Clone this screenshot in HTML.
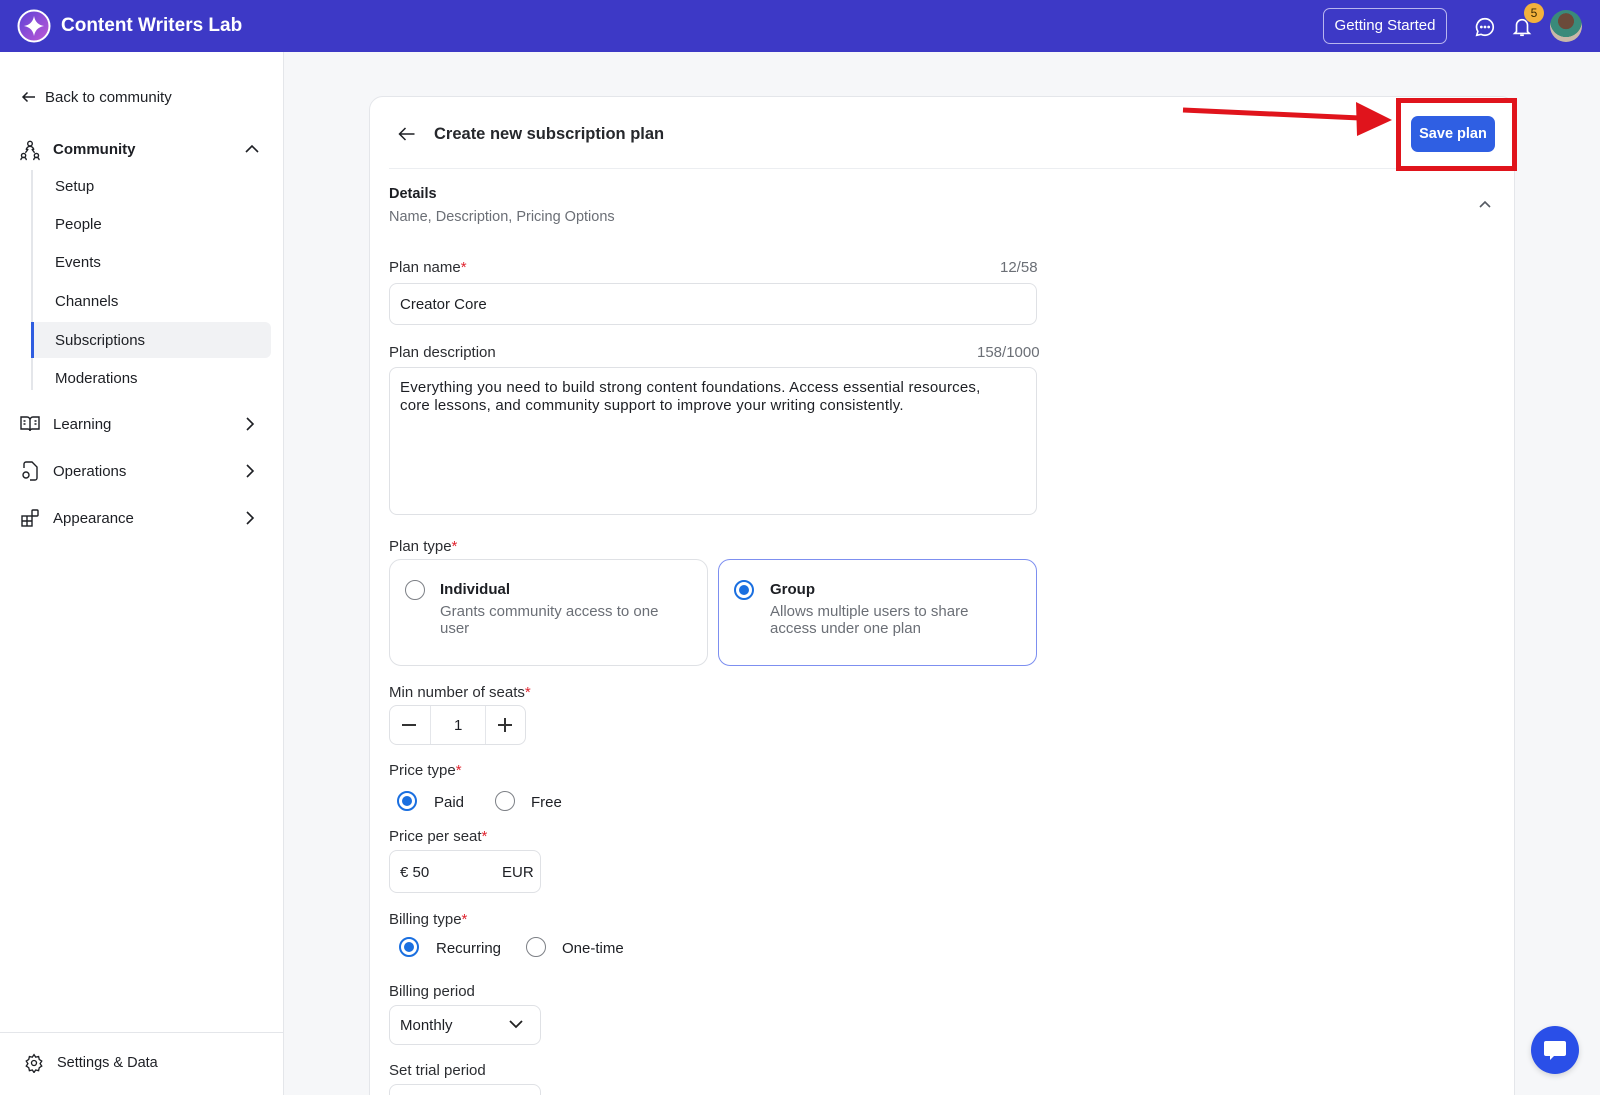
<!DOCTYPE html>
<html><head><meta charset="utf-8"><style>
*{box-sizing:border-box;margin:0;padding:0}
html,body{width:1600px;height:1095px;overflow:hidden}
body{background:#f6f7f9;font-family:"Liberation Sans",Arial,sans-serif;color:#1d1f24;position:relative;font-size:15px}
.abs{position:absolute}
.hdr{left:0;top:0;width:1600px;height:52px;background:#3d39c6}
.side{left:0;top:52px;width:284px;height:1043px;background:#fff;border-right:1px solid #e4e6ea}
.t{position:absolute;white-space:nowrap;line-height:1}
.card{left:369px;top:96px;width:1146px;height:1040px;background:#fff;border:1px solid #e4e6ea;border-radius:14px}
.inp{position:absolute;border:1px solid #dfe1e5;border-radius:8px;background:#fff}
.lbl{position:absolute;font-size:15px;color:#2b2d31;line-height:1;white-space:nowrap}
.req{color:#e0242f}
.radio{position:absolute;width:20px;height:20px;border-radius:50%;border:1.5px solid #7d8086;background:#fff}
.radio.on{border:2px solid #1a6fe0}
.radio.on::after{content:"";position:absolute;left:3px;top:3px;width:10px;height:10px;border-radius:50%;background:#1a6fe0}
.gray{color:#6b6f76}
</style></head><body>
<div class="abs hdr"></div>
<svg class="abs" style="left:17px;top:9px" width="34" height="34" viewBox="0 0 34 34"><defs><linearGradient id="g" x1="0" y1="0" x2="1" y2="1"><stop offset="0" stop-color="#5b3fd6"/><stop offset="1" stop-color="#c05ad6"/></linearGradient></defs><circle cx="17" cy="17" r="15.5" fill="url(#g)" stroke="#fff" stroke-width="2"/><path d="M17 7 Q18.5 15.5 27 17 Q18.5 18.5 17 27 Q15.5 18.5 7 17 Q15.5 15.5 17 7Z" fill="#fff"/></svg>
<div class="t" style="left:61px;top:16px;color:#fff;font-weight:bold;font-size:19px">Content Writers Lab</div>
<div class="abs" style="left:1323px;top:8px;width:124px;height:36px;border:1.5px solid #b9b6ee;border-radius:7px;color:#fff;font-size:15px;text-align:center;line-height:34px">Getting Started</div>
<svg class="abs" style="left:1474px;top:16px" width="22" height="22" viewBox="0 0 24 24" fill="none" stroke="#fff" stroke-width="1.8"><path d="M12 3a9 9 0 0 1 0 18c-1.5 0-3-.4-4.3-1L3 21l1.2-4.2A9 9 0 0 1 12 3z"/><circle cx="8" cy="12" r=".6" fill="#fff"/><circle cx="12" cy="12" r=".6" fill="#fff"/><circle cx="16" cy="12" r=".6" fill="#fff"/></svg>
<svg class="abs" style="left:1511px;top:15px" width="22" height="24" viewBox="0 0 24 24" fill="none" stroke="#fff" stroke-width="1.8"><path d="M6 17V10a6 6 0 0 1 12 0v7l2 2H4z"/><path d="M10 21h4"/></svg>
<div class="abs" style="left:1524px;top:3px;width:20px;height:20px;border-radius:50%;background:#f3b23c;color:#3b2a00;font-size:12px;text-align:center;line-height:20px">5</div>
<div class="abs" style="left:1550px;top:10px;width:32px;height:32px;border-radius:50%;background:radial-gradient(circle at 50% 35%,#6b4a3a 0 30%,#3a8a7a 31% 60%,#c9b8a8 61%)"></div>

<div class="abs side"></div>
<svg class="abs" style="left:20px;top:88px" width="18" height="18" viewBox="0 0 24 24" fill="none" stroke="#1d1f24" stroke-width="2"><path d="M20 12H4M10 6l-6 6 6 6"/></svg>
<div class="t" style="left:45px;top:90px">Back to community</div>
<svg class="abs" style="left:19px;top:139px" width="22" height="22" viewBox="0 0 24 24" fill="none" stroke="#1d1f24" stroke-width="1.5"><circle cx="12" cy="5" r="2.5"/><circle cx="5" cy="18" r="2.3"/><circle cx="19" cy="18" r="2.3"/><path d="M8 12a4 4 0 0 1 8 0M2 23a3 3 0 0 1 6 0M16 23a3 3 0 0 1 6 0M7 15l3-4M17 15l-3-4"/></svg>
<div class="t" style="left:53px;top:142px;font-weight:bold">Community</div>
<svg class="abs" style="left:244px;top:143px" width="16" height="12" viewBox="0 0 16 12" fill="none" stroke="#1d1f24" stroke-width="1.6"><path d="M2 9l6-6 6 6"/></svg>
<div class="abs" style="left:31px;top:170px;width:2px;height:220px;background:#e4e6ea"></div>
<div class="abs" style="left:31px;top:322px;width:240px;height:36px;background:#f1f2f4;border-radius:0 6px 6px 0"></div>
<div class="abs" style="left:31px;top:322px;width:3px;height:36px;background:#2f5de0"></div>
<div class="t" style="left:55px;top:179px">Setup</div>
<div class="t" style="left:55px;top:217px">People</div>
<div class="t" style="left:55px;top:255px">Events</div>
<div class="t" style="left:55px;top:294px">Channels</div>
<div class="t" style="left:55px;top:333px">Subscriptions</div>
<div class="t" style="left:55px;top:371px">Moderations</div>
<svg class="abs" style="left:20px;top:415px" width="20" height="18" viewBox="0 0 20 18" fill="none" stroke="#1d1f24" stroke-width="1.4"><path d="M1 2h6a3 3 0 0 1 3 3v11a2 2 0 0 0-2-2H1zM19 2h-6a3 3 0 0 0-3 3v11a2 2 0 0 1 2-2h7z"/><path d="M3.5 6h2M3.5 9h2M14.5 6h2M14.5 9h2"/></svg>
<div class="t" style="left:53px;top:417px">Learning</div>
<svg class="abs" style="left:21px;top:461px" width="18" height="20" viewBox="0 0 18 20" fill="none" stroke="#1d1f24" stroke-width="1.4"><path d="M3 7V3a2 2 0 0 1 2-2h6l5 5v11a2 2 0 0 1-2 2H9"/><circle cx="5" cy="14" r="3"/></svg>
<div class="t" style="left:53px;top:464px">Operations</div>
<svg class="abs" style="left:21px;top:509px" width="18" height="18" viewBox="0 0 18 18" fill="none" stroke="#1d1f24" stroke-width="1.4"><rect x="1" y="7" width="10" height="10"/><path d="M1 12h10M6 7v10"/><rect x="11" y="1" width="6" height="6" rx="1"/></svg>
<div class="t" style="left:53px;top:511px">Appearance</div>
<svg class="abs" style="left:245px;top:417px" width="10" height="14" viewBox="0 0 10 14" fill="none" stroke="#1d1f24" stroke-width="1.6"><path d="M2 1l6 6-6 6"/></svg>
<svg class="abs" style="left:245px;top:464px" width="10" height="14" viewBox="0 0 10 14" fill="none" stroke="#1d1f24" stroke-width="1.6"><path d="M2 1l6 6-6 6"/></svg>
<svg class="abs" style="left:245px;top:511px" width="10" height="14" viewBox="0 0 10 14" fill="none" stroke="#1d1f24" stroke-width="1.6"><path d="M2 1l6 6-6 6"/></svg>
<div class="abs" style="left:0;top:1032px;width:284px;height:1px;background:#e4e6ea"></div>
<svg class="abs" style="left:24px;top:1053px" width="20" height="20" viewBox="0 0 24 24" fill="none" stroke="#1d1f24" stroke-width="1.6"><circle cx="12" cy="12" r="3"/><path d="M12 2l2 3 3.5-.8.8 3.5 3 2-2 3 2 3-3 2-.8 3.5-3.5-.8-2 3-2-3-3.5.8-.8-3.5-3-2 2-3-2-3 3-2 .8-3.5 3.5.8z"/></svg>
<div class="t" style="left:57px;top:1056px;font-size:14.5px">Settings &amp; Data</div>

<div class="abs card"></div>
<svg class="abs" style="left:398px;top:126px" width="18" height="16" viewBox="0 0 24 20" fill="none" stroke="#1d1f24" stroke-width="2"><path d="M22 10H3M10 2l-8 8 8 8"/></svg>
<div class="t" style="left:434px;top:126px;font-size:16.5px;font-weight:bold;color:#26282c">Create new subscription plan</div>
<div class="abs" style="left:389px;top:168px;width:1106px;height:1px;background:#eceef1"></div>
<div class="abs" style="left:1396px;top:98px;width:121px;height:73px;border:5px solid #e0141c"></div>
<div class="abs" style="left:1411px;top:116px;width:84px;height:36px;background:#2f5fe3;border-radius:7px;color:#fff;font-weight:bold;font-size:14.5px;text-align:center;line-height:36px">Save plan</div>
<svg class="abs" style="left:1180px;top:98px" width="215" height="42" viewBox="0 0 215 42"><path d="M3 12 L180 20" stroke="#e0141c" stroke-width="5"/><path d="M176 4 L212 22 L177 38 Z" fill="#e0141c"/></svg>

<div class="t" style="left:389px;top:187px;font-weight:bold;font-size:14.5px">Details</div>
<div class="t gray" style="left:389px;top:210px;font-size:14.5px">Name, Description, Pricing Options</div>
<svg class="abs" style="left:1479px;top:200px" width="12" height="8" viewBox="0 0 12 8" fill="none" stroke="#555a63" stroke-width="1.6"><path d="M1 7l5-5 5 5"/></svg>

<div class="lbl" style="left:389px;top:260px">Plan name<span class="req">*</span></div>
<div class="lbl gray" style="left:1000px;top:260px">12/58</div>
<div class="inp" style="left:389px;top:283px;width:648px;height:42px"></div>
<div class="t" style="left:400px;top:297px;font-size:15px">Creator Core</div>

<div class="lbl" style="left:389px;top:345px">Plan description</div>
<div class="lbl gray" style="left:977px;top:345px">158/1000</div>
<div class="inp" style="left:389px;top:367px;width:648px;height:148px"></div>
<div class="abs" style="left:400px;top:379px;width:600px;font-size:15px;line-height:18px;letter-spacing:0.2px">Everything you need to build strong content foundations. Access essential resources, core lessons, and community support to improve your writing consistently.</div>

<div class="lbl" style="left:389px;top:539px">Plan type<span class="req">*</span></div>
<div class="inp" style="left:389px;top:559px;width:319px;height:107px;border-radius:12px"></div>
<div class="inp" style="left:718px;top:559px;width:319px;height:107px;border-radius:12px;border-color:#7d8ff0"></div>
<div class="radio" style="left:405px;top:580px"></div>
<div class="radio on" style="left:734px;top:580px"></div>
<div class="t" style="left:440px;top:582px;font-weight:bold;font-size:15px">Individual</div>
<div class="abs gray" style="left:440px;top:603px;width:225px;font-size:15px;line-height:17px">Grants community access to one user</div>
<div class="t" style="left:770px;top:582px;font-weight:bold;font-size:15px">Group</div>
<div class="abs gray" style="left:770px;top:603px;width:220px;font-size:15px;line-height:17px">Allows multiple users to share access under one plan</div>

<div class="lbl" style="left:389px;top:685px">Min number of seats<span class="req">*</span></div>
<div class="inp" style="left:389px;top:705px;width:137px;height:40px"></div>
<div class="abs" style="left:430px;top:706px;width:1px;height:38px;background:#e4e6ea"></div>
<div class="abs" style="left:485px;top:706px;width:1px;height:38px;background:#e4e6ea"></div>
<div class="abs" style="left:402px;top:724px;width:14px;height:1.6px;background:#333"></div>
<div class="t" style="left:454px;top:718px;font-size:15px">1</div>
<div class="abs" style="left:498px;top:724px;width:14px;height:1.6px;background:#333"></div>
<div class="abs" style="left:504px;top:718px;width:1.6px;height:14px;background:#333"></div>

<div class="lbl" style="left:389px;top:763px">Price type<span class="req">*</span></div>
<div class="radio on" style="left:397px;top:791px"></div>
<div class="t" style="left:434px;top:795px;font-size:15px">Paid</div>
<div class="radio" style="left:495px;top:791px"></div>
<div class="t" style="left:531px;top:795px;font-size:15px">Free</div>

<div class="lbl" style="left:389px;top:829px">Price per seat<span class="req">*</span></div>
<div class="inp" style="left:389px;top:850px;width:152px;height:43px"></div>
<div class="t" style="left:400px;top:865px;font-size:15px">€ 50</div>
<div class="t" style="left:502px;top:865px;font-size:15px">EUR</div>

<div class="lbl" style="left:389px;top:912px">Billing type<span class="req">*</span></div>
<div class="radio on" style="left:399px;top:937px"></div>
<div class="t" style="left:436px;top:941px;font-size:15px">Recurring</div>
<div class="radio" style="left:526px;top:937px"></div>
<div class="t" style="left:562px;top:941px;font-size:15px">One-time</div>

<div class="lbl" style="left:389px;top:984px">Billing period</div>
<div class="inp" style="left:389px;top:1005px;width:152px;height:40px"></div>
<div class="t" style="left:400px;top:1018px;font-size:15px">Monthly</div>
<svg class="abs" style="left:509px;top:1020px" width="14" height="9" viewBox="0 0 14 9" fill="none" stroke="#222" stroke-width="1.8"><path d="M1 1l6 6 6-6"/></svg>

<div class="lbl" style="left:389px;top:1063px">Set trial period</div>
<div class="inp" style="left:389px;top:1084px;width:152px;height:40px"></div>

<div class="abs" style="left:1531px;top:1026px;width:48px;height:48px;border-radius:50%;background:#2a4fe8;box-shadow:0 2px 6px rgba(0,0,0,.15)"></div>
<svg class="abs" style="left:1542px;top:1038px" width="26" height="26" viewBox="0 0 26 26"><path d="M4 3h18a2 2 0 0 1 2 2v11a2 2 0 0 1-2 2H12l-4 4v-4H4a2 2 0 0 1-2-2V5a2 2 0 0 1 2-2z" fill="#fff"/></svg>
</body></html>
